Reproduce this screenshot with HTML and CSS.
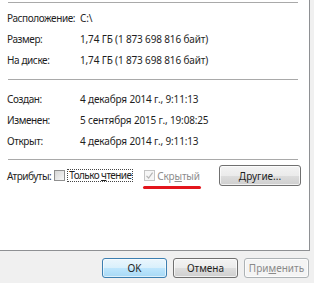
FILE: index.html
```html
<!DOCTYPE html>
<html lang="ru">
<head>
    <meta charset="UTF-8">
    <title>Свойства: Локальный диск (C:)</title>
    <link rel="stylesheet" href="styles.css">
</head>
<body>
    <div class="window">
        <div class="panel">
            <div class="sep sep-top"></div>

            <div class="group">
                <div class="row"><span class="label">Расположение:</span><span class="value">C:\</span></div>
                <div class="row"><span class="label">Размер:</span><span class="value">1,74 ГБ (1 873 698 816 байт)</span></div>
                <div class="row"><span class="label">На диске:</span><span class="value">1,74 ГБ (1 873 698 816 байт)</span></div>
            </div>

            <div class="sep sep-mid"></div>

            <div class="group">
                <div class="row"><span class="label">Создан:</span><span class="value">4 декабря 2014 г., 9:11:13</span></div>
                <div class="row"><span class="label">Изменен:</span><span class="value">5 сентября 2015 г., 19:08:25</span></div>
                <div class="row"><span class="label">Открыт:</span><span class="value">4 декабря 2014 г., 9:11:13</span></div>
            </div>

            <div class="sep sep-attrs"></div>

            <div class="attrs">
                <span class="attrs-label">Атрибуты:</span>
                <label class="check">
                    <span class="box"></span>
                    <span class="focus">Только <u>ч</u>тение</span>
                </label>
                <label class="check disabled">
                    <span class="box">
                        <svg width="9" height="9" viewBox="0 0 9 9"><path d="M1.5 4.8 L3.6 7 L7.6 1.6" fill="none" stroke="#b4b4b4" stroke-width="1.2"/></svg>
                    </span>
                    <span class="tight">Скр<u>ы</u>тый</span>
                    <span class="mark"></span>
                </label>
                <button class="btn btn-other"><u>Д</u>ругие...</button>
            </div>
        </div>

        <div class="buttons">
            <button class="btn btn-default">OK</button>
            <button class="btn">Отмена</button>
            <button class="btn btn-disabled">При<u>м</u>енить</button>
        </div>
    </div>
</body>
</html>
```

FILE: styles.css
```css
:root {
    --text-color: #1e1e1e;
    --line-color: #a9a9a9;
    --face-color: #f0f0f0;
}

body {
    margin: 0;
    background-color: var(--face-color);
    font-family: 'Noto Sans', 'Liberation Sans', sans-serif;
    font-size: 10px;
    color: var(--text-color);
}

.window {
    width: 314px;
    height: 283px;
    overflow: hidden;
}

.panel {
    width: 298px;
    height: 250px;
    padding-left: 7px;
    padding-right: 4px;
    background-color: #fff;
    border-right: 1px solid #8e9093;
    border-bottom: 1px solid #8e9093;
    box-sizing: content-box;
}

.sep {
    height: 1px;
    width: 290px;
    margin: 9px 0 9px 1px;
    background-color: var(--line-color);
}

.sep-top {
    margin-top: 0;
    margin-bottom: 7px;
    position: relative;
    top: 2px;
}

.sep-mid {
    margin-top: 8px;
}

.sep-attrs {
    margin-top: 7px;
    margin-bottom: 5px;
}

.row {
    display: flex;
    height: 21px;
    line-height: 21px;
    white-space: nowrap;
}

.label {
    width: 73px;
    flex-shrink: 0;
    letter-spacing: -0.4px;
}

.value {
    letter-spacing: -0.15px;
}

.attrs {
    display: flex;
    align-items: center;
    height: 21px;
    white-space: nowrap;
}

.attrs-label {
    margin-right: 3px;
    letter-spacing: -0.5px;
}

.tight {
    letter-spacing: -0.2px;
}

.check {
    display: flex;
    align-items: center;
    position: relative;
}

.box {
    width: 9px;
    height: 9px;
    border: 1px solid #8f8f8f;
    background: linear-gradient(135deg, #d6d6d6, #f8f8f8);
    display: flex;
    align-items: center;
    justify-content: center;
    margin-right: 2px;
    flex-shrink: 0;
}

.focus {
    border: 1px dotted #444;
    padding: 0 1px;
    line-height: 11px;
    letter-spacing: -0.6px;
}

.check.disabled {
    margin-left: 11px;
    color: #8d8d8d;
}

.check.disabled .box {
    border-color: #c4c4c4;
    background: #f6f6f6;
}

.mark {
    position: absolute;
    left: -1px;
    right: -1px;
    bottom: -6px;
    height: 3px;
    border-radius: 2px;
    background-color: #e3151c;
}

.btn {
    font-family: inherit;
    font-size: 10px;
    color: var(--text-color);
    height: 20px;
    width: 65px;
    padding: 0;
    border: 1px solid #707070;
    border-radius: 3px;
    background: linear-gradient(#f3f3f3 0%, #ebebeb 50%, #dddddd 51%, #cfcfcf 100%);
    box-shadow: inset 0 0 0 1px rgba(255, 255, 255, 0.7);
    flex-shrink: 0;
}

.btn-other {
    width: 82px;
    height: 21px;
    margin-left: auto;
    margin-right: 4px;
}

.btn-default {
    border-color: #3c7fb1;
    background: linear-gradient(#eaf6fd 0%, #d9f0fc 50%, #bee6fd 51%, #a7d9f5 100%);
    box-shadow: inset 0 0 0 1px rgba(255, 255, 255, 0.6);
}

.btn-disabled {
    color: #8a8a8a;
    border-color: #adb2b5;
    background: #f4f4f4;
}

.buttons {
    display: flex;
    justify-content: flex-end;
    gap: 6px;
    padding: 7px 5px 0 0;
}
```
